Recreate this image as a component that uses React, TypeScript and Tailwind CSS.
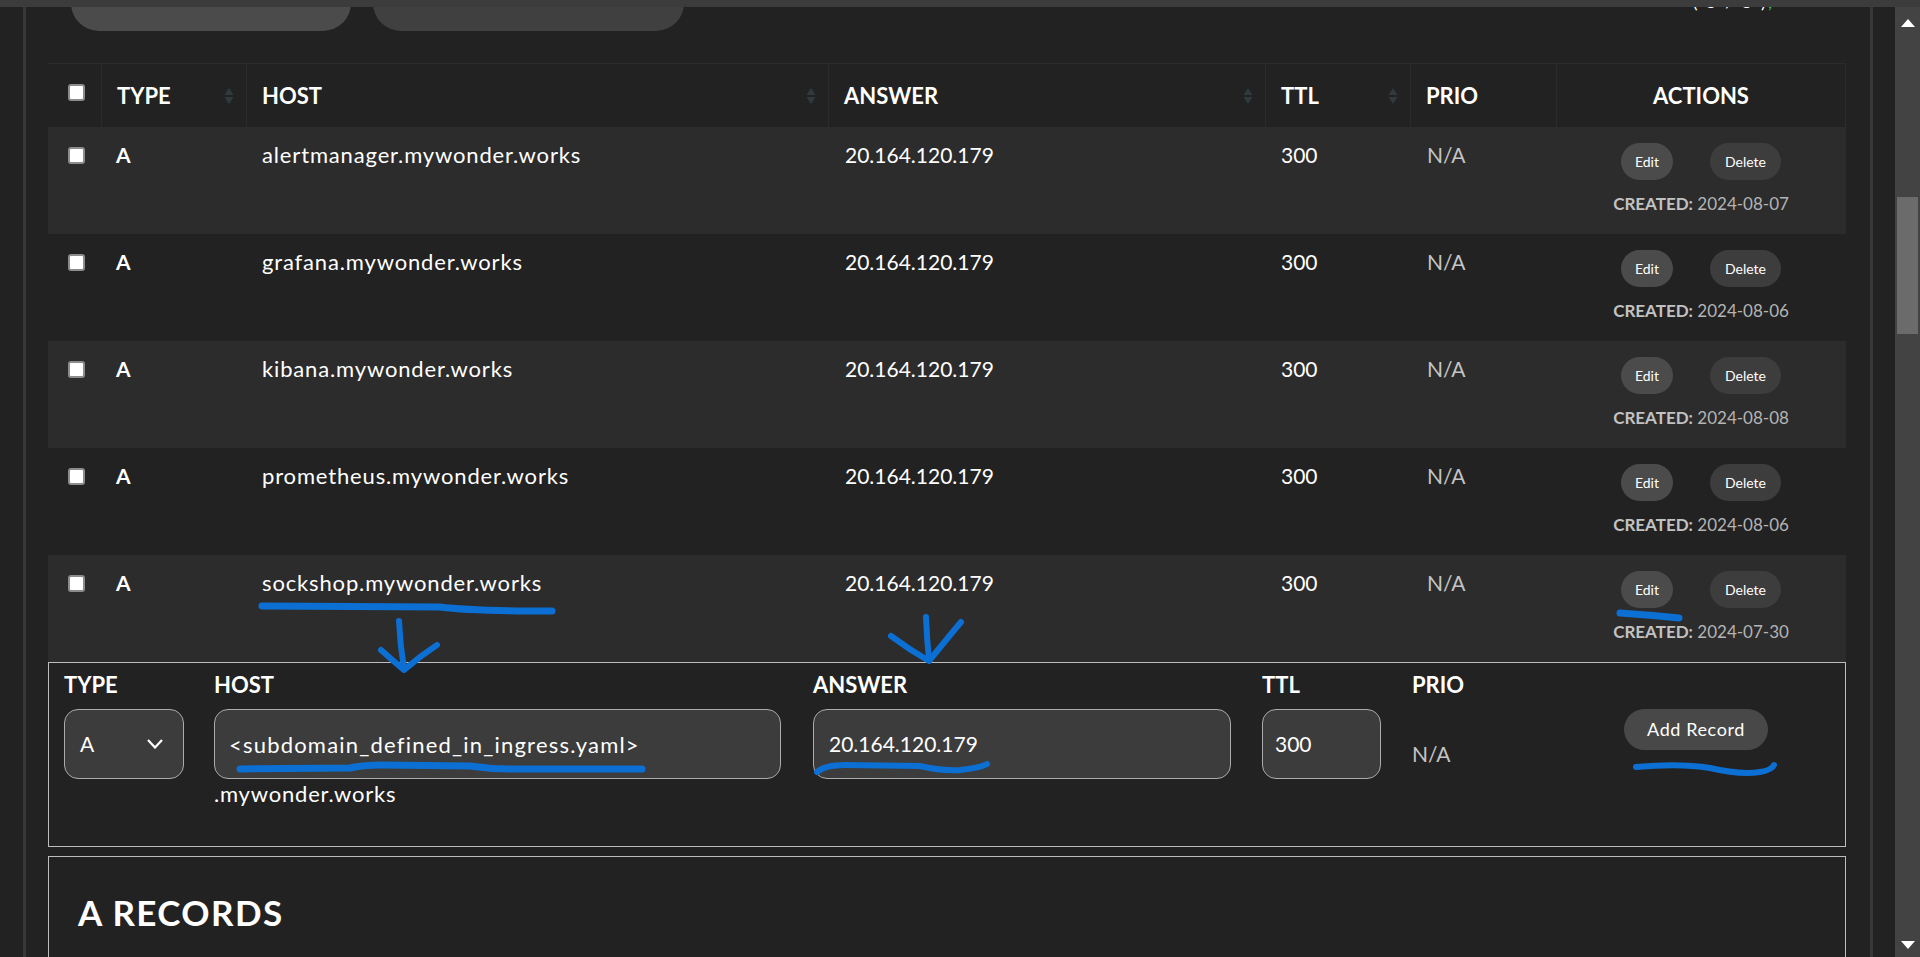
import React from "react";

type RecordRow = {
  host: string;
  created: string;
};

const rows: RecordRow[] = [
  { host: "alertmanager.mywonder.works", created: "2024-08-07" },
  { host: "grafana.mywonder.works", created: "2024-08-06" },
  { host: "kibana.mywonder.works", created: "2024-08-08" },
  { host: "prometheus.mywonder.works", created: "2024-08-06" },
  { host: "sockshop.mywonder.works", created: "2024-07-30" },
];

const font = { fontFamily: "Lato, 'Noto Sans', sans-serif" };

const Checkbox = () => (
  <div className="w-[17px] h-[17px] rounded-[3px] bg-white border-2 border-[#8c8c8c]" />
);

const SortIcon = () => (
  <svg width="10" height="18" viewBox="0 0 10 18">
    <path d="M5 1 L9.5 8 L0.5 8 Z" fill="#2f3a3e" />
    <path d="M5 17 L9.5 10 L0.5 10 Z" fill="#2f3a3e" />
  </svg>
);

const HeaderCell = ({ label, sort, center }: { label: string; sort?: boolean; center?: boolean }) => (
  <div
    className={`h-[63px] border-l border-[#2b2b2b] flex items-center font-bold text-[22px] text-white ${
      center ? "justify-center" : "justify-between pl-[15px] pr-[12px]"
    }`}
  >
    <span>{label}</span>
    {sort && <SortIcon />}
  </div>
);

const Annotations = () => (
  <svg
    className="absolute left-0 top-0 pointer-events-none"
    width="1920"
    height="957"
    viewBox="0 0 1920 957"
    fill="none"
    stroke="#0b6fd3"
    strokeWidth="6"
    strokeLinecap="round"
    strokeLinejoin="round"
  >
    <path d="M262 606 L440 607 Q470 611 552 611" strokeWidth="7" />
    <path d="M399 621 Q400 645 404 668" />
    <path d="M381 650 Q392 660 404 670 Q420 656 437 645" />
    <path d="M926 617 Q927 640 929 660" />
    <path d="M891 636 Q910 650 929 661 Q946 640 961 622" />
    <path d="M1620 613 Q1650 615 1679 618" strokeWidth="7" />
    <path d="M240 769 L350 768 Q362 765 382 765 L470 766 Q490 769 510 769 L642 769" strokeWidth="7" />
    <path d="M817 772 Q825 765 845 765 L920 766 Q940 771 960 770 Q980 768 987 764" strokeWidth="6" />
    <path d="M1636 767 Q1680 763 1710 768 Q1740 775 1760 772 Q1772 770 1774 765" strokeWidth="6" />
  </svg>
);

export default function App() {
  return (
    <div className="relative w-[1920px] h-[957px] overflow-hidden bg-[#222222] text-white" style={font}>
      <div className="h-[7px] bg-[#3c3c3c]" />
      <div className="flex h-[950px]">
        <div className="w-[23px]" />
        <div className="w-[3px] bg-[#383838]" />

        <main className="w-[1844px] pl-[22px] pr-[24px]">
          {/* top buttons, mostly scrolled out of view */}
          <div className="flex h-[24px] items-start">
            <div className="ml-[23px] w-[280px] h-[24px] overflow-hidden">
              <div className="-mt-[32px] h-[56px] rounded-full bg-[#4b4b4b]" />
            </div>
            <div className="ml-[22px] w-[311px] h-[24px] overflow-hidden">
              <div className="-mt-[32px] h-[56px] rounded-full bg-[#404040]" />
            </div>
            <div className="ml-auto mr-[72px] h-[5px] overflow-hidden">
              <div className="-mt-[17px] text-[18px] leading-[22px] text-white tracking-[2px]">
                ( 5 / 5 )<span className="text-[#3fbf4f]">,</span>
              </div>
            </div>
          </div>

          {/* records table */}
          <div className="mt-[32px] w-[1798px]">
            <div className="grid grid-cols-[53px_145px_582px_437px_145px_146px_1fr] border-t border-r border-[#2b2b2b]">
              <div className="h-[63px] pl-[20px] pt-[20px]">
                <Checkbox />
              </div>
              <HeaderCell label="TYPE" sort />
              <HeaderCell label="HOST" sort />
              <HeaderCell label="ANSWER" sort />
              <HeaderCell label="TTL" sort />
              <HeaderCell label="PRIO" />
              <HeaderCell label="ACTIONS" center />
            </div>

            {rows.map((row, i) => (
              <div
                key={row.host}
                className={`grid grid-cols-[53px_145px_582px_437px_145px_146px_1fr] h-[107px] text-[21px] leading-[28px] ${
                  i % 2 === 0 ? "bg-[#2c2c2c]" : "bg-[#222222]"
                }`}
              >
                <div className="pl-[20px] pt-[20px]">
                  <Checkbox />
                </div>
                <div className="pl-[15px] pt-[14px] font-bold">A</div>
                <div className="pl-[16px] pt-[14px] text-[22px] tracking-[0.85px]">{row.host}</div>
                <div className="pl-[17px] pt-[14px]">20.164.120.179</div>
                <div className="pl-[16px] pt-[14px]">300</div>
                <div className="pl-[17px] pt-[14px] text-[#c4c4c4]">N/A</div>
                <div className="pt-[16px] flex flex-col items-center">
                  <div className="flex gap-[37px]">
                    <button className="w-[52px] h-[37px] rounded-full bg-[#4b4b4b] text-white text-[14px]">Edit</button>
                    <button className="w-[71px] h-[37px] rounded-full bg-[#3d3d3d] text-white text-[14px]">Delete</button>
                  </div>
                  <div className="mt-[12px] text-[17px] leading-[24px] text-[#b4b4b4]">
                    <span className="font-bold text-[#c2c2c2]">CREATED:</span> {row.created}
                  </div>
                </div>
              </div>
            ))}

            {/* add record form */}
            <div className="border border-[#bdbdbd] h-[185px] pl-[15px] pr-[9px] pt-[10px] flex">
              <div className="w-[120px]">
                <div className="font-bold text-[22px] leading-[24px]">TYPE</div>
                <div className="mt-[12px] h-[70px] rounded-[14px] border border-[#ababab] bg-[#3c3c3c] flex items-center justify-between pl-[15px] pr-[20px] text-[21px]">
                  <span>A</span>
                  <svg width="16" height="10" viewBox="0 0 16 10" fill="none" stroke="white" strokeWidth="2.2">
                    <path d="M1 1 L8 8.5 L15 1" />
                  </svg>
                </div>
              </div>
              <div className="ml-[30px] w-[567px]">
                <div className="font-bold text-[22px] leading-[24px]">HOST</div>
                <div className="mt-[12px] h-[70px] rounded-[14px] border border-[#ababab] bg-[#3c3c3c] flex items-center pl-[14px] text-[22px] tracking-[1.2px]">
                  &lt;subdomain_defined_in_ingress.yaml&gt;
                </div>
                <div className="mt-[3px] text-[22px] leading-[24px] tracking-[0.8px]">.mywonder.works</div>
              </div>
              <div className="ml-[32px] w-[418px]">
                <div className="font-bold text-[22px] leading-[24px]">ANSWER</div>
                <div className="mt-[12px] h-[70px] rounded-[14px] border border-[#ababab] bg-[#3c3c3c] flex items-center pl-[15px] text-[21px]">
                  20.164.120.179
                </div>
              </div>
              <div className="ml-[31px] w-[119px]">
                <div className="font-bold text-[22px] leading-[24px]">TTL</div>
                <div className="mt-[12px] h-[70px] rounded-[14px] border border-[#ababab] bg-[#3c3c3c] flex items-center pl-[12px] text-[21px]">
                  300
                </div>
              </div>
              <div className="ml-[31px] w-[144px]">
                <div className="font-bold text-[22px] leading-[24px]">PRIO</div>
                <div className="mt-[12px] h-[70px] pt-[20px] flex items-center text-[21px] text-[#c4c4c4]">N/A</div>
              </div>
              <div className="flex-1 flex flex-col items-center">
                <div className="h-[24px]" />
                <button className="mt-[12px] w-[144px] h-[41px] rounded-full bg-[#484848] text-white text-[18px] tracking-[0.6px]">
                  Add Record
                </button>
              </div>
            </div>

            {/* A records section */}
            <div className="mt-[9px] border border-[#bdbdbd] h-[200px] pl-[29px] pt-[35px]">
              <h2 className="font-bold text-[35px] leading-[40px] tracking-[1.4px]">A RECORDS</h2>
            </div>
          </div>
        </main>

        <div className="w-[3px] bg-[#383838]" />
        <div className="w-[22px]" />

        {/* browser scrollbar */}
        <div className="w-[25px] bg-[#434343] flex flex-col items-center">
          <svg className="mt-[12px]" width="14" height="8" viewBox="0 0 14 8">
            <path d="M7 0 L14 8 L0 8 Z" fill="white" />
          </svg>
          <div className="mt-[170px] w-[21px] h-[137px] bg-[#6b6b6b]" />
          <div className="flex-1" />
          <svg className="mb-[8px]" width="14" height="8" viewBox="0 0 14 8">
            <path d="M0 0 L14 0 L7 8 Z" fill="white" />
          </svg>
        </div>
      </div>
      <Annotations />
    </div>
  );
}
